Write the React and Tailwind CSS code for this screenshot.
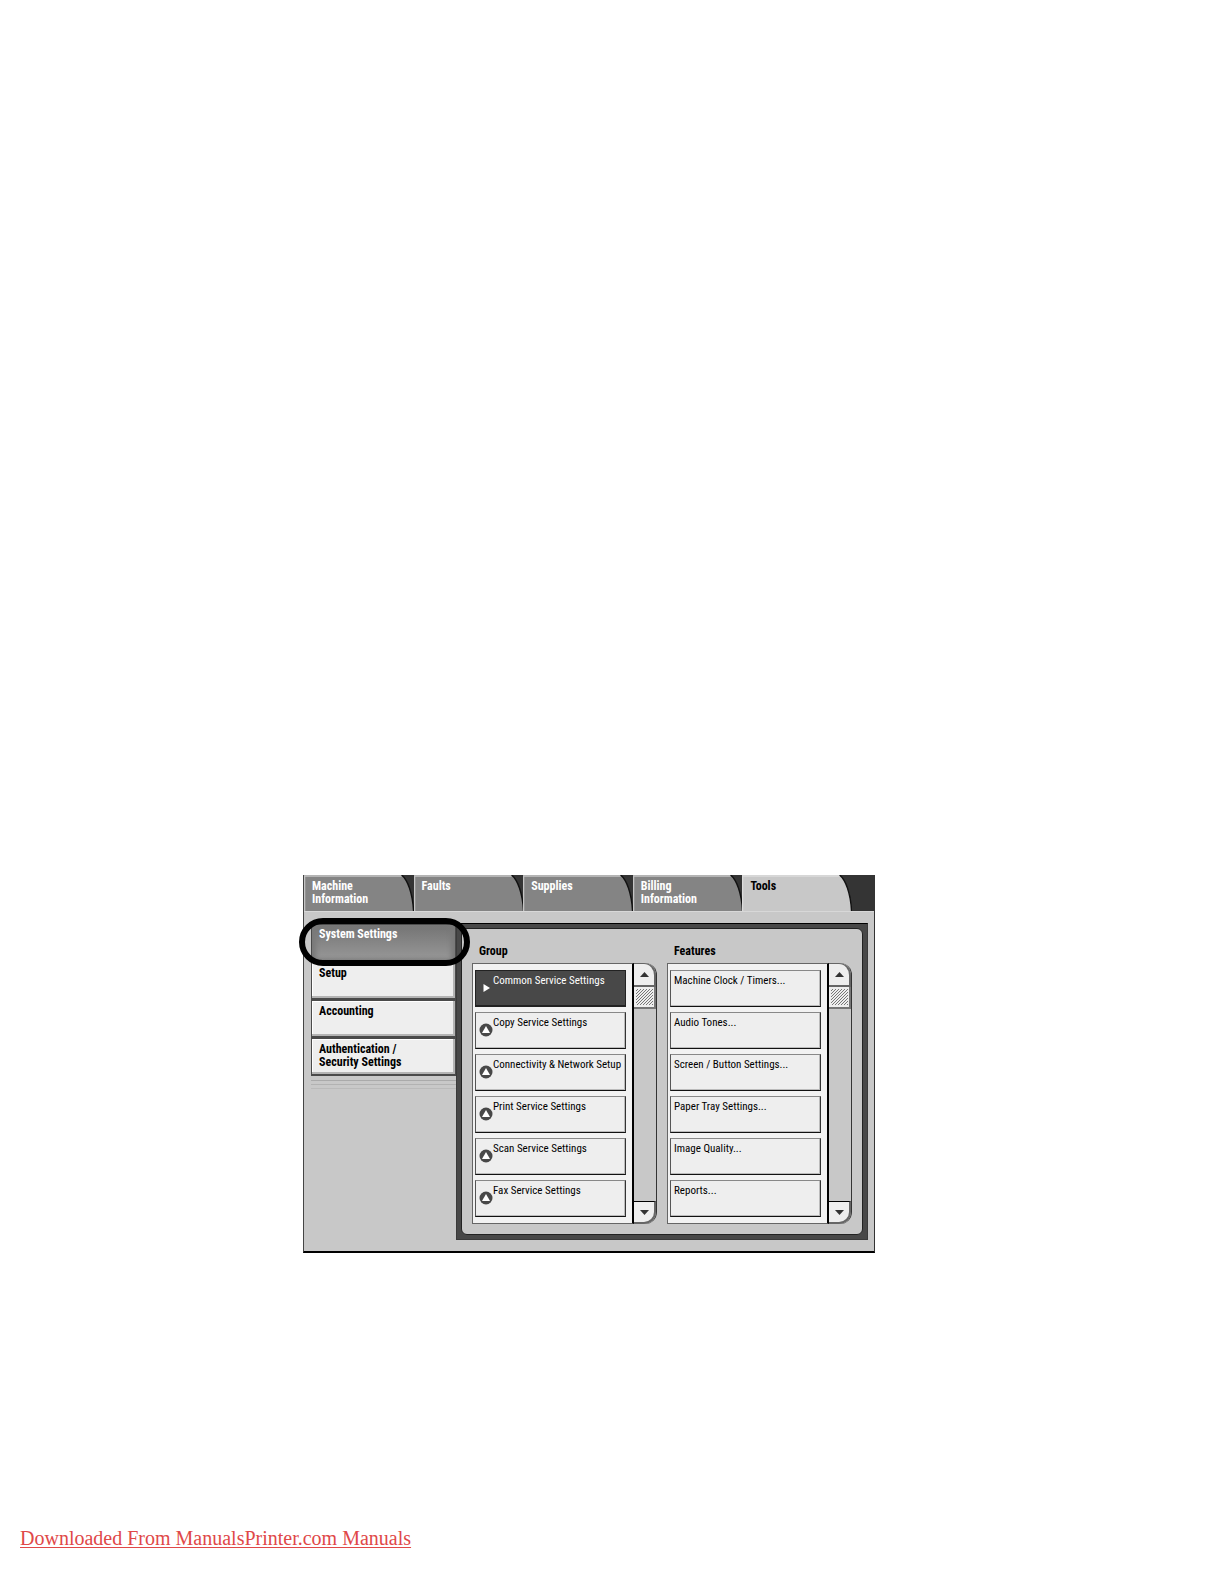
import React from "react";

const tabs = [
  ["Machine", "Information"],
  ["Faults"],
  ["Supplies"],
  ["Billing", "Information"],
  ["Tools"],
];

const menu = [
  { label: "System Settings", active: true },
  { label: "Setup" },
  { label: "Accounting" },
  { label: "Authentication / Security Settings" },
];

const groups = [
  "Common Service Settings",
  "Copy Service Settings",
  "Connectivity & Network Setup",
  "Print Service Settings",
  "Scan Service Settings",
  "Fax Service Settings",
];

const features = [
  "Machine Clock / Timers...",
  "Audio Tones...",
  "Screen / Button Settings...",
  "Paper Tray Settings...",
  "Image Quality...",
  "Reports...",
];

function Tab({ lines, active }) {
  return (
    <button
      type="button"
      role="tab"
      aria-selected={active}
      className={
        "relative h-9 flex-1 pt-[5px] pl-2 text-left " +
        (active ? "text-black" : "text-white")
      }
    >
      <svg
        className="absolute inset-0 h-full w-full"
        viewBox="0 0 110 36"
        preserveAspectRatio="none"
        aria-hidden="true"
      >
        <path d="M0 36V0H98C104 5 109 18 110 36Z" fill={active ? "#c8c8c8" : "#848484"} />
        <path d="M0.5 36V1H98" fill="none" stroke={active ? "#dcdcdc" : "#c4c4c4"} strokeWidth="1.5" />
        <path d="M98 0C104 5 109 18 110 36" fill="none" stroke="#111" strokeWidth="1.5" />
      </svg>
      <span className="relative flex h-full flex-col justify-start">
        {lines.map((l) => (
          <span key={l}>{l}</span>
        ))}
      </span>
    </button>
  );
}

function MenuButton({ label, active }) {
  return (
    <button
      type="button"
      className={
        "flex h-[38px] items-start border border-t-2 border-[#4a4a4a] pr-10 pl-[7px] text-left " +
        (active
          ? "bg-linear-to-b from-[#747474] to-[#989898] pt-[3px] text-white shadow-[inset_4px_0_4px_#7a7a7a,inset_-4px_0_4px_#7a7a7a]"
          : "bg-[#eeeeee] pt-1 text-black shadow-[inset_-2px_-2px_0_#b4b4b4,inset_1px_1px_0_#fff]")
      }
    >
      {label}
    </button>
  );
}

function GroupIcon({ active }) {
  return (
    <svg className="mt-[10px] h-[14px] w-[14px] shrink-0" viewBox="0 0 14 14" aria-hidden="true">
      {active ? (
        <path d="M4.5 3L11 7L4.5 11Z" fill="#fff" />
      ) : (
        <>
          <circle cx="7" cy="7" r="6.5" fill="#484848" />
          <path d="M7 3L11 10H3Z" fill="#fff" />
        </>
      )}
    </svg>
  );
}

function ItemButton({ label, active, icon }) {
  return (
    <button
      type="button"
      className={
        "flex h-[37px] items-start border pl-[3px] text-left text-[11px] leading-[13px] whitespace-nowrap " +
        (active
          ? "border-b-2 border-[#222] bg-[#484848] text-white"
          : "border-t-[#888] border-r-[#333] border-b-[#111] border-l-[#555] bg-[#eeeeee] text-black shadow-[inset_-1px_-1px_0_#bbb]")
      }
    >
      {icon && <GroupIcon active={active} />}
      <span className="pt-[3px]">{label}</span>
    </button>
  );
}

function ScrollBar({ label }) {
  return (
    <div className="flex w-[23px] shrink-0 flex-col rounded-r-xl border-r border-[#333] bg-[#c8c8c8]">
      <button
        type="button"
        aria-label={"Scroll up " + label}
        className="flex h-[24px] items-center justify-center rounded-tr-xl border-t border-r-2 border-b-2 border-[#666] bg-[#eeeeee]"
      >
        <svg className="h-[5px] w-[9px]" viewBox="0 0 9 5" aria-hidden="true">
          <path d="M4.500 0L9 5H0Z" fill="#333" />
        </svg>
      </button>
      <div className="flex-1">
        <svg className="h-[22px] w-full border-r-2 border-b-2 border-[#777] bg-[#eeeeee]" aria-hidden="true">
          <defs>
            <pattern id={"hatch-" + label} width="3" height="3" patternUnits="userSpaceOnUse">
              <path d="M0 3L3 0" stroke="#777" strokeWidth="1" />
            </pattern>
          </defs>
          <rect x="2" y="2" width="17" height="16" fill={"url(#hatch-" + label + ")"} />
        </svg>
      </div>
      <button
        type="button"
        aria-label={"Scroll down " + label}
        className="flex h-[23px] items-center justify-center rounded-br-xl border-t border-r-2 border-b-2 border-[#666] border-t-black bg-[#eeeeee]"
      >
        <svg className="h-[5px] w-[9px]" viewBox="0 0 9 5" aria-hidden="true">
          <path d="M0 0H9L4.500 5Z" fill="#333" />
        </svg>
      </button>
    </div>
  );
}

function ListPanel({ title, items, icons }) {
  return (
    <section className="flex min-w-0 flex-1 flex-col">
      <h2 className="h-[19px] pt-px pl-[7px] font-bold">{title}</h2>
      <div className="flex">
        <div className="flex h-[261px] min-w-0 flex-1 flex-col gap-[5px] border border-r-2 border-[#666] border-r-black bg-[#f2f2f2] pt-[6px] pr-[6px] pl-[2px]">
          {items.map((item, i) => (
            <ItemButton key={item} label={item} icon={icons} active={icons && i === 0} />
          ))}
        </div>
        <ScrollBar label={title} />
      </div>
    </section>
  );
}

export default function App() {
  return (
    <div className="flex min-h-screen flex-col bg-white">
      <main className="mt-[875px] ml-[303px] w-full max-w-[572px] border-r border-b-2 border-l border-black border-r-[#333] border-l-[#444] bg-[#c8c8c8] font-['Roboto_Condensed','Roboto','Liberation_Sans_Narrow',sans-serif] text-[12px] leading-[13px]">
        <div role="tablist" className="flex bg-[#343434] pr-[22px] font-bold">
          {tabs.map((lines, i) => (
            <Tab key={lines[0]} lines={lines} active={i === 4} />
          ))}
        </div>
        <div className="flex border-t border-[#d8d8d8] pt-[11px] pr-[6px] pb-[11px] pl-[7px]">
          <nav className="relative w-[145px] shrink-0 font-bold">
            <div className="flex flex-col border-b border-[#4a4a4a]">
              {menu.map((m) => (
                <MenuButton key={m.label} label={m.label} active={m.active} />
              ))}
            </div>
            <div className="mt-1 flex flex-col gap-[3px]">
              <div className="h-px bg-[#aaa]" />
              <div className="h-px bg-[#b2b2b2]" />
              <div className="h-px bg-[#bababa]" />
            </div>
            <div className="pointer-events-none absolute -top-[5px] -left-[12px] z-10 h-[48px] w-[171px] rounded-full border-[6px] border-black" />
          </nav>
          <div className="flex-1 border border-[#3a3a3a] border-t-black bg-[#484848] p-1">
            <div className="flex gap-[10px] rounded-md border border-[#222] bg-[#c8c8c8] pt-[15px] pr-[10px] pb-[10px] pl-[10px]">
              <ListPanel title="Group" items={groups} icons />
              <ListPanel title="Features" items={features} />
            </div>
          </div>
        </div>
      </main>
      <footer className="mt-auto pb-[33px] pl-[20px]">
        <a
          href="#manuals"
          className="font-['Liberation_Serif',serif] text-[20px] leading-6 text-[#e04848] underline decoration-1 underline-offset-2"
        >
          Downloaded From ManualsPrinter.com Manuals
        </a>
      </footer>
    </div>
  );
}
